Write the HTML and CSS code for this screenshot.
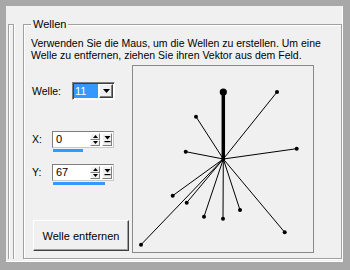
FILE: index.html
```html
<!DOCTYPE html>
<html lang="de">
<head>
    <meta charset="UTF-8">
    <title>Wellen</title>
    <link rel="stylesheet" href="styles.css">
</head>
<body>
    <div class="window">
        <div class="strip"></div>
        <div class="group">
            <span class="legend">Wellen</span>
            <p class="hint">Verwenden Sie die Maus, um die Wellen zu erstellen. Um eine<br>Welle zu entfernen, ziehen Sie ihren Vektor aus dem Feld.</p>
            <div class="main">
                <div class="controls">
                    <div class="row row-welle">
                        <label class="lbl lbl-welle">Welle:</label>
                        <div class="combo">
                            <span class="combo-value">11</span>
                            <span class="combo-btn">
                                <svg width="7" height="4" viewBox="0 0 7 4"><path d="M0 0h7L3.5 4z" fill="#000"/></svg>
                            </span>
                        </div>
                    </div>

                    <div class="row row-x">
                        <label class="lbl lbl-xy">X:</label>
                        <div class="spin-wrap">
                            <div class="spin">
                                <span class="spin-text">0</span>
                                <div class="updown">
                                    <span class="ud"><svg width="5" height="3" viewBox="0 0 5 3"><path d="M2.5 0L5 3H0z" fill="#000"/></svg></span>
                                    <span class="ud"><svg width="5" height="3" viewBox="0 0 5 3"><path d="M0 0h5L2.5 3z" fill="#000"/></svg></span>
                                </div>
                                <span class="drop"><svg width="7" height="7" viewBox="0 0 7 7"><path d="M0.5 0h6L3.5 3.5z" fill="#000"/><rect x="0.5" y="5" width="6" height="1.2" fill="#000"/></svg></span>
                            </div>
                            <div class="bar" style="width: 30px"></div>
                        </div>
                    </div>

                    <div class="row row-y">
                        <label class="lbl lbl-xy">Y:</label>
                        <div class="spin-wrap">
                            <div class="spin">
                                <span class="spin-text">67</span>
                                <div class="updown">
                                    <span class="ud"><svg width="5" height="3" viewBox="0 0 5 3"><path d="M2.5 0L5 3H0z" fill="#000"/></svg></span>
                                    <span class="ud"><svg width="5" height="3" viewBox="0 0 5 3"><path d="M0 0h5L2.5 3z" fill="#000"/></svg></span>
                                </div>
                                <span class="drop"><svg width="7" height="7" viewBox="0 0 7 7"><path d="M0.5 0h6L3.5 3.5z" fill="#000"/><rect x="0.5" y="5" width="6" height="1.2" fill="#000"/></svg></span>
                            </div>
                            <div class="bar" style="width: 52px"></div>
                        </div>
                    </div>

                    <button class="btn" type="button">Welle entfernen</button>
                </div>

                <div class="canvas">
                    <svg width="180" height="186" viewBox="0 0 180 186">
                        <g stroke="#000" stroke-width="1">
                            <line x1="90.3" y1="93" x2="144" y2="26"/>
                            <line x1="90.3" y1="93" x2="63" y2="50.7"/>
                            <line x1="90.3" y1="93" x2="52.7" y2="85.7"/>
                            <line x1="90.3" y1="93" x2="163.7" y2="82.7"/>
                            <line x1="90.3" y1="93" x2="39.7" y2="129.7"/>
                            <line x1="90.3" y1="93" x2="53.7" y2="136.7"/>
                            <line x1="90.3" y1="93" x2="71" y2="150.7"/>
                            <line x1="90.3" y1="93" x2="90" y2="152.7"/>
                            <line x1="90.3" y1="93" x2="107" y2="144"/>
                            <line x1="90.3" y1="93" x2="151.7" y2="166.3"/>
                            <line x1="90.3" y1="93" x2="8" y2="178.7"/>
                        </g>
                        <line x1="90.3" y1="93" x2="90.3" y2="26" stroke="#000" stroke-width="3.5"/>
                        <g fill="#000">
                            <circle cx="90.3" cy="26" r="3.6"/>
                            <circle cx="144" cy="26" r="2"/>
                            <circle cx="63" cy="50.7" r="2"/>
                            <circle cx="52.7" cy="85.7" r="2"/>
                            <circle cx="163.7" cy="82.7" r="2"/>
                            <circle cx="39.7" cy="129.7" r="2"/>
                            <circle cx="53.7" cy="136.7" r="2"/>
                            <circle cx="71" cy="150.7" r="2"/>
                            <circle cx="90" cy="152.7" r="2"/>
                            <circle cx="107" cy="144" r="2"/>
                            <circle cx="151.7" cy="166.3" r="2"/>
                            <circle cx="8" cy="178.7" r="2"/>
                            <circle cx="90.3" cy="93" r="2"/>
                        </g>
                    </svg>
                </div>
            </div>
        </div>
    </div>
</body>
</html>
```

FILE: styles.css
```css
body {
    margin: 0;
    background: #a8a8a8;
    font-family: "Liberation Sans", Arial, sans-serif;
    font-size: 10.5px;
    color: #000;
}
.window {
    margin: 6px 7px 0 6px;
    height: 256px;
    background: #f0f0f0;
    box-shadow: inset -1px -1px 0 #fff;
    display: flex;
    padding: 18px 1px 3px 2px;
    box-sizing: border-box;
}
.strip {
    width: 6px;
    margin-right: 9px;
    border: 1px solid #a0a0a0;
    border-bottom: none;
    box-shadow: inset 1px 1px 0 #fff, 1px 0 0 #fff;
    box-sizing: border-box;
}
.group {
    position: relative;
    width: 319px;
    height: 235px;
    border: 1px solid #a0a0a0;
    box-shadow: inset 1px 1px 0 #fff, 1px 1px 0 #fff;
    box-sizing: border-box;
    padding: 12px 0 0 7px;
}
.legend {
    position: absolute;
    top: -7px;
    left: 7px;
    padding: 0 2px;
    background: #f0f0f0;
    line-height: 12px;
    font-size: 11px;
}
.hint {
    margin: 0;
    line-height: 12px;
    white-space: nowrap;
}
.main {
    display: flex;
    margin-top: 4px;
}
.controls {
    width: 101px;
    display: flex;
    flex-direction: column;
    align-items: flex-start;
}
.row {
    display: flex;
    align-items: flex-start;
}
.lbl {
    padding-left: 1px;
    box-sizing: border-box;
    line-height: 12px;
}
.lbl-welle {
    width: 41px;
    margin-top: 3px;
}
.lbl-xy {
    width: 21px;
    margin-top: 2px;
}
.row-welle {
    margin-top: 17px;
}
.row-x {
    margin-top: 31px;
}
.row-y {
    margin-top: 12px;
}
.combo {
    width: 43px;
    height: 18px;
    display: flex;
    align-items: stretch;
    padding: 1px;
    border: 1px solid;
    border-color: #7f7f7f #fff #fff #7f7f7f;
    box-shadow: inset 1px 1px 0 #404040;
    background: #fff;
    box-sizing: border-box;
}
.combo-value {
    flex: 1;
    background: #3399ff;
    color: #fff;
    font-size: 11px;
    line-height: 14px;
    padding-left: 1px;
    margin-right: 1px;
}
.combo-btn {
    width: 14px;
    display: flex;
    align-items: center;
    justify-content: center;
    background: #f0f0f0;
    border: 1px solid;
    border-color: #fff #404040 #404040 #fff;
    box-shadow: inset -1px -1px 0 #808080;
    box-sizing: border-box;
}
.spin-wrap {
    display: flex;
    flex-direction: column;
}
.spin {
    width: 62px;
    height: 17px;
    display: flex;
    align-items: stretch;
    gap: 2px;
    padding: 1px 1px 1px 2px;
    border: 1px solid;
    border-color: #7f7f7f #c8c8c8 #c8c8c8 #7f7f7f;
    background: #fff;
    box-sizing: border-box;
}
.spin-text {
    flex: 1;
    font-size: 11px;
    line-height: 13px;
    padding-left: 1px;
}
.updown {
    width: 10px;
    display: flex;
    flex-direction: column;
}
.ud, .drop {
    flex: 1;
    display: flex;
    align-items: center;
    justify-content: center;
    background: #f0f0f0;
    border: 1px solid;
    border-color: #fff #808080 #808080 #fff;
    box-sizing: border-box;
}
.drop {
    flex: none;
    width: 10px;
}
.bar {
    height: 3px;
    margin: 1px 0 0 1px;
    background: #3399ff;
}
.btn {
    margin: 35px 0 0 2px;
    width: 96px;
    height: 31px;
    padding: 0;
    font-family: "Liberation Sans", Arial, sans-serif;
    font-size: 11px;
    color: #000;
    background: #f0f0f0;
    border: 1px solid;
    border-color: #fff #404040 #404040 #fff;
    box-shadow: inset -1px -1px 0 #a0a0a0;
}
.canvas {
    width: 182px;
    height: 188px;
    border: 1px solid #8a8a8a;
    box-sizing: border-box;
    background: #f0f0f0;
}
.canvas svg {
    display: block;
}
```
